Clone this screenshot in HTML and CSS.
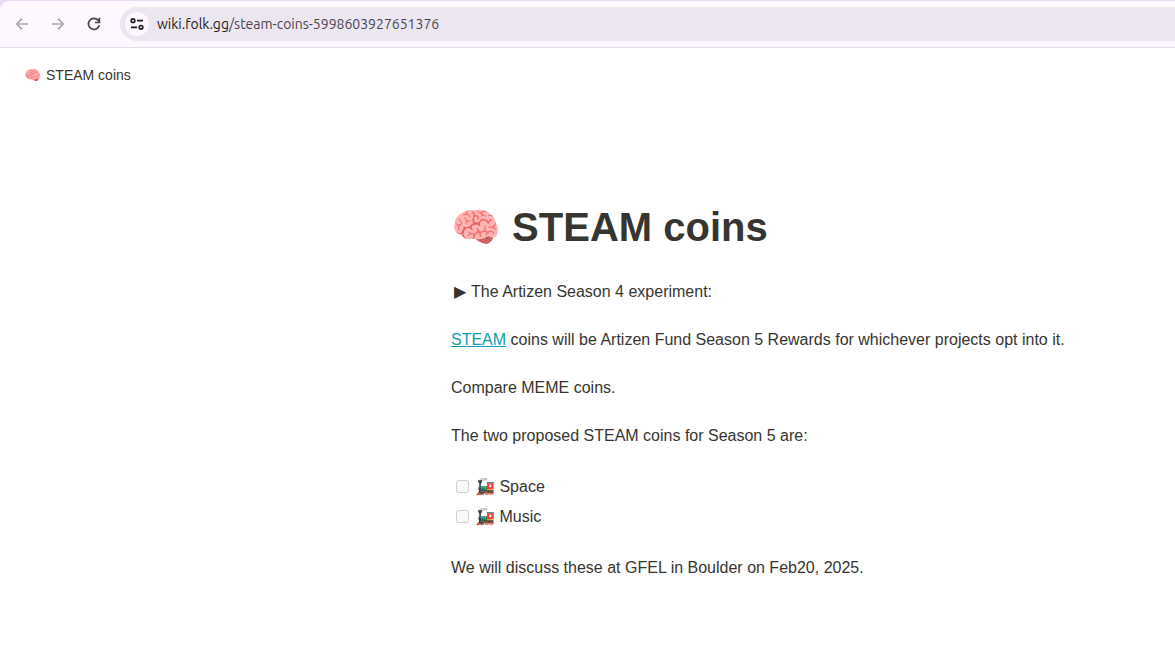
FILE: index.html
```html
<!DOCTYPE html>
<html lang="en">
<head>
<meta charset="utf-8">
<meta name="viewport" content="width=device-width, initial-scale=1">
<title>STEAM coins</title>
<link rel="stylesheet" href="styles.css">
</head>
<body>
<div class="browser">
  <div class="toolbar">
    <button class="nav-button" type="button" aria-label="Back" disabled>
      <svg viewBox="0 0 16 16"><path d="M14 8H2.8M8 2.6 2.6 8 8 13.4"/></svg>
    </button>
    <button class="nav-button" type="button" aria-label="Forward" disabled>
      <svg viewBox="0 0 16 16"><path d="M2 8h11.2M8 2.6 13.4 8 8 13.4"/></svg>
    </button>
    <button class="nav-button" type="button" aria-label="Reload">
      <svg viewBox="0 0 16 16"><path d="M13.3 9.3A5.5 5.5 0 1 1 12.2 4.4L13.4 6M13.4 1.8v4.7H8.9"/></svg>
    </button>
    <div class="address">
      <button class="site-button" type="button" aria-label="View site information">
        <svg viewBox="0 0 16 16"><circle cx="4" cy="4.7" r="1.8"/><path d="M8 4.7h6M2 11.3h6"/><circle cx="12" cy="11.3" r="1.8"/></svg>
      </button>
      <span class="url"><span class="host">wiki.folk.gg</span>/steam-coins-5998603927651376</span>
    </div>
  </div>
</div>
<header class="breadcrumb"><span class="crumb-icon">🧠</span><span>STEAM coins</span></header>
<main class="page">
  <h1 class="title">🧠 STEAM coins</h1>
  <details class="block">
    <summary class="toggle">The Artizen Season 4 experiment:</summary>
  </details>
  <p class="block"><a class="link" href="#steam">STEAM</a> coins will be Artizen Fund Season 5 Rewards for whichever projects opt into it.</p>
  <p class="block">Compare MEME coins.</p>
  <p class="block">The two proposed STEAM coins for Season 5 are:</p>
  <ul class="tasks">
    <li><label class="task"><input class="check" type="checkbox" disabled><span>🚂 Space</span></label></li>
    <li><label class="task"><input class="check" type="checkbox" disabled><span>🚂 Music</span></label></li>
  </ul>
  <p class="block">We will discuss these at GFEL in Boulder on Feb20, 2025.</p>
</main>
</body>
</html>
```

FILE: styles.css
```css
* { box-sizing: border-box; }

body {
  margin: 0;
  background: #fff;
  color: #37352f;
  font: 16px/24px "Liberation Sans", Arial, sans-serif;
}

.browser {
  padding-top: 1px;
  background: #eadcf7;
}

.toolbar {
  display: flex;
  align-items: center;
  gap: 12px;
  height: 47px;
  padding-left: 10px;
  border-bottom: 1px solid #e6dcea;
  border-top-left-radius: 9px;
  background: #fef7ff;
}

.nav-button,
.site-button {
  display: flex;
  align-items: center;
  justify-content: center;
  flex: none;
  width: 24px;
  height: 24px;
  padding: 0;
  border: 0;
  border-radius: 50%;
  background: none;
  color: #49454e;
}

.nav-button:disabled { color: #aca6af; }

svg {
  width: 16px;
  height: 16px;
  fill: none;
  stroke: currentColor;
  stroke-width: 1.7;
}

.address {
  display: flex;
  align-items: center;
  flex: 1;
  gap: 8px;
  min-width: 0;
  height: 34px;
  margin-left: 2px;
  padding-left: 5px;
  border-radius: 17px 0 0 17px;
  background: #ece6f0;
}

.site-button {
  background: #fef7ff;
  color: #1d1b20;
}

.url {
  overflow: hidden;
  color: #49454e;
  font: 14px/24px Ubuntu, Roboto, sans-serif;
  white-space: nowrap;
}

.host { color: #1d1b20; }

.breadcrumb {
  display: flex;
  align-items: center;
  gap: 5px;
  padding: 15px 24px;
  font-size: 14px;
}

.page {
  padding: 101px 16px 64px 451px;
}

.title {
  margin: 0 0 29px;
  font-size: 40px;
  line-height: 48px;
}

.block { margin: 0 0 24px; }

.toggle {
  display: flex;
  gap: 5px;
  padding-left: 3px;
  list-style: none;
}

.toggle::before { content: "▶"; }

details[open] .toggle::before { content: "▼"; }

.link { color: #0b9db3; }

.tasks {
  margin: 0 0 24px;
  padding: 0;
  list-style: none;
}

.task {
  display: flex;
  align-items: center;
  gap: 6px;
  height: 30px;
  padding-left: 5px;
}

.check {
  width: 13px;
  height: 13px;
  margin: 0 0 2px;
}
```
